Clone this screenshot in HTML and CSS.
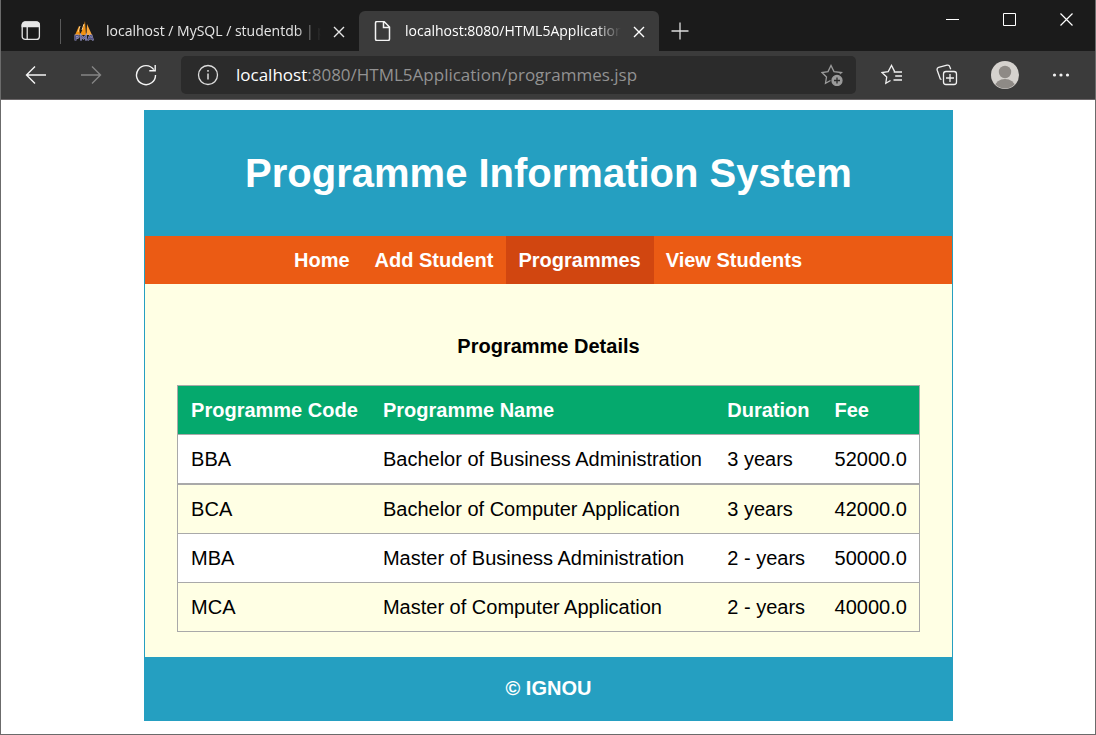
FILE: index.html
```
<!DOCTYPE html>
<html lang="en">
<head>
<meta charset="utf-8">
<title>Programme Information System</title>
<link rel="stylesheet" href="styles.css">
</head>
<body>
<div class="window">
  <header class="titlebar">
    <button class="icon-button tab-actions" aria-label="Tab actions menu">
      <svg width="20" height="20" viewBox="0 0 20 20" fill="none" stroke="#e6e6e6" stroke-width="1.3"><rect x="1.2" y="1.2" width="17.2" height="17.2" rx="3"/><path d="M1.2 5V4a3 3 0 0 1 3-3h11a3 3 0 0 1 3 3v1.6H1.2z" fill="#e6e6e6"/><path d="M6.2 5v13"/></svg>
    </button>
    <div class="tab">
      <svg class="favicon" width="20" height="20" viewBox="0 0 20 20"><path d="M1 14 5 5l1 9zM6 14c2-4 4-9 5-14l1 14z" fill="#f29111"/><path d="M12.500 14 13 3l5 11z" fill="#f9a63a"/><path d="M8 9 10 3M4 11l2-6" stroke="#ffd08a"/><path d="M1.500 19.500v-5h3q1 2.500-3 2.500M7 19.500v-5l2.500 3 2.500-3v5M14 19.500l2-5h1.500l1.500 5M14.500 17.500h4" fill="none" stroke="#9a9ab8" stroke-width="2"/><path d="M1.500 19.500v-5h3q1 2.500-3 2.500M7 19.500v-5l2.500 3 2.500-3v5M14 19.500l2-5h1.500l1.500 5M14.500 17.500h4" fill="none" stroke="#50508a" stroke-width="1"/></svg>
      <span class="tab-title">localhost / MySQL / studentdb | p</span>
      <button class="icon-button close" aria-label="Close tab"><svg width="12" height="12" viewBox="0 0 12 12" stroke="#e6e6e6" stroke-width="1.400"><path d="M1 1l10 10M11 1 1 11"/></svg></button>
    </div>
    <div class="tab tab-active">
      <svg class="favicon" width="20" height="20" viewBox="0 0 20 20" fill="none" stroke="#f4f4f4" stroke-width="1.500"><path d="M2.500 2a1.500 1.500 0 0 1 1.500-1.500h7l5.500 5.500v12a1.500 1.500 0 0 1-1.500 1.500H4A1.500 1.500 0 0 1 2.500 18zM10.500.7v5.800h5.800"/></svg>
      <span class="tab-title">localhost:8080/HTML5Application</span>
      <button class="icon-button close" aria-label="Close tab"><svg width="12" height="12" viewBox="0 0 12 12" stroke="#fff" stroke-width="1.400"><path d="M1 1l10 10M11 1 1 11"/></svg></button>
    </div>
    <button class="icon-button new-tab" aria-label="New tab"><svg width="18" height="18" viewBox="0 0 18 18" stroke="#ddd" stroke-width="1.300"><path d="M9 .5v17M.5 9h17"/></svg></button>
    <div class="window-buttons">
      <button class="icon-button" aria-label="Minimize"><svg width="13" height="13" viewBox="0 0 13 13" stroke="#fff"><path d="M0 6.500h13"/></svg></button>
      <button class="icon-button" aria-label="Maximize"><svg width="13" height="13" viewBox="0 0 13 13" stroke="#fff" fill="none"><path d="M.5.5h12v12H.5z"/></svg></button>
      <button class="icon-button" aria-label="Close"><svg width="13" height="13" viewBox="0 0 13 13" stroke="#fff" stroke-width="1.200"><path d="M.5.5l12 12M12.500.5l-12 12"/></svg></button>
    </div>
  </header>
  <div class="toolbar">
    <div class="navigation">
      <button class="icon-button" aria-label="Back"><svg width="22" height="20" viewBox="0 0 22 20" fill="none" stroke="#f4f4f4" stroke-width="1.400"><path d="M21 10H1.500M10 1.500 1.500 10l8.500 8.500"/></svg></button>
      <button class="icon-button" aria-label="Forward" disabled><svg width="22" height="20" viewBox="0 0 22 20" fill="none" stroke="#858585" stroke-width="1.400"><path d="M1 10h19.500M12 1.500l8.500 8.500-8.500 8.500"/></svg></button>
      <button class="icon-button" aria-label="Refresh"><svg width="22" height="22" viewBox="0 0 22 22" fill="none" stroke="#f4f4f4" stroke-width="1.400"><path d="M20.500 11A9.500 9.500 0 1 1 18.800 5.700M20.200 1v5.800h-5.900"/></svg></button>
    </div>
    <div class="address">
      <button class="icon-button" aria-label="Site information"><svg width="22" height="22" viewBox="0 0 22 22" fill="none" stroke="#ddd" stroke-width="1.300"><circle cx="11" cy="11" r="9.500"/><path d="M11 9.500v6M11 6v1.700" stroke-width="1.500"/></svg></button>
      <div class="url"><strong>localhost</strong>:8080/HTML5Application/programmes.jsp</div>
      <button class="icon-button" aria-label="Add to favorites"><svg width="22" height="22" viewBox="0 0 22 22" fill="none" stroke="#9b9b9b" stroke-width="1.300"><path d="M9.500 16.500 4.500 19.200l1-6.200L1 8.500l6-.9L10 1.500l3 6.100 7.500.9-1.700 1.500"/><circle cx="16" cy="16.500" r="5" fill="#9b9b9b"/><path d="M16 13.500v6M13 16.500h6" stroke="#2b2b2b"/></svg></button>
    </div>
    <div class="tools">
      <button class="icon-button" aria-label="Favorites"><svg width="22" height="22" viewBox="0 0 22 22" fill="none" stroke="#f1f1f1" stroke-width="1.300"><path d="M9.500 16.500 4.800 19.200l.9-6.200L1 8.500l6.200-.9L10.500 1.500l3 5.900M12.700 8H21M14.200 12H21M12.500 16H21"/></svg></button>
      <button class="icon-button" aria-label="Collections"><svg width="22" height="22" viewBox="0 0 22 22" fill="none" stroke="#f1f1f1" stroke-width="1.300"><rect x="7.500" y="7.500" width="13" height="13" rx="2.500"/><path d="M14 10v8M10 14h8M5.500 15.500 4.300 15 1.200 6.200A2.300 2.300 0 0 1 2.600 3.400L11 1.200a2.300 2.300 0 0 1 2.800 1.500l.9 2.500"/></svg></button>
      <button class="icon-button" aria-label="Profile"><svg width="28" height="28" viewBox="0 0 28 28"><defs><clipPath id="face"><circle cx="14" cy="14" r="13.500"/></clipPath></defs><circle cx="14" cy="14" r="14" fill="#d5d2ce"/><g fill="#8e8a86" clip-path="url(#face)"><circle cx="14" cy="11" r="6.200"/><ellipse cx="14" cy="25.500" rx="10" ry="7.500"/></g></svg></button>
      <button class="icon-button" aria-label="Settings and more"><svg width="18" height="4" viewBox="0 0 18 4" fill="#f1f1f1"><circle cx="2.500" cy="2" r="1.600"/><circle cx="9" cy="2" r="1.600"/><circle cx="15.500" cy="2" r="1.600"/></svg></button>
    </div>
  </div>
  <div class="page">
    <div class="site">
      <header class="banner"><h1>Programme Information System</h1></header>
      <nav class="menu">
        <a href="#">Home</a>
        <a href="#">Add Student</a>
        <a href="#" class="current" aria-current="page">Programmes</a>
        <a href="#">View Students</a>
      </nav>
      <main class="content">
        <h2>Programme Details</h2>
        <table class="programmes">
          <thead><tr><th>Programme Code</th><th>Programme Name</th><th>Duration</th><th>Fee</th></tr></thead>
          <tbody>
            <tr><td>BBA</td><td>Bachelor of Business Administration</td><td>3 years</td><td>52000.0</td></tr>
            <tr><td>BCA</td><td>Bachelor of Computer Application</td><td>3 years</td><td>42000.0</td></tr>
            <tr><td>MBA</td><td>Master of Business Administration</td><td>2 - years</td><td>50000.0</td></tr>
            <tr><td>MCA</td><td>Master of Computer Application</td><td>2 - years</td><td>40000.0</td></tr>
          </tbody>
        </table>
      </main>
      <footer class="footer">© IGNOU</footer>
    </div>
  </div>
</div>
</body>
</html>
```
FILE: styles.css
```
* { box-sizing: border-box; }

body {
  margin: 0;
  font-family: "Liberation Sans", Arial, sans-serif;
  font-size: 20px;
  line-height: 24px;
  color: #000;
}

.window {
  display: flex;
  flex-direction: column;
  min-height: 100vh;
  border: 1px solid #6b6b6b;
  border-top: 0;
}

.titlebar, .toolbar, .url { font-family: "Open Sans", "Noto Sans", sans-serif; }

.icon-button {
  display: flex;
  flex: none;
  align-items: center;
  justify-content: center;
  padding: 0;
  border: 0;
  background: none;
}

.titlebar {
  display: flex;
  align-items: flex-end;
  height: 51px;
  background: #1b1b1b;
}

.tab-actions { width: 59px; height: 40px; }

.tab {
  display: flex;
  align-items: center;
  width: 299px;
  height: 40px;
  padding: 0 14px;
  color: #e6e6e6;
  font-size: 14px;
  background: linear-gradient(#5a5a5a, #5a5a5a) 0 50% / 1px 25px no-repeat;
}

.tab-active {
  width: 300px;
  border-radius: 6px 6px 0 0;
  color: #fff;
  background: #3b3b3b;
}

.favicon { flex: none; margin-right: 12px; }

.tab-title {
  flex: 1;
  min-width: 0;
  overflow: hidden;
  white-space: nowrap;
  mask-image: linear-gradient(to right, #000 88%, transparent);
}

.close { margin-left: 12px; padding: 2px 0 0; }

.new-tab { width: 42px; height: 40px; }

.window-buttons {
  display: flex;
  align-self: flex-start;
  margin-left: auto;
}

.window-buttons .icon-button { width: 57px; height: 39px; }

.toolbar {
  display: flex;
  align-items: center;
  height: 49px;
  border-bottom: 1px solid #6a6668;
  background: #3b3b3b;
}

.navigation {
  display: flex;
  gap: 33px;
  padding: 0 24px;
}

.address {
  display: flex;
  flex: 1;
  align-items: center;
  gap: 17px;
  min-width: 0;
  height: 38px;
  padding: 0 13px 0 16px;
  border-radius: 5px;
  background: #2b2b2b;
}

.url {
  flex: 1;
  min-width: 0;
  overflow: hidden;
  white-space: nowrap;
  font-size: 17px;
  color: #929292;
}

.url strong { font-weight: 400; color: #fff; }

.tools {
  display: flex;
  align-items: center;
  gap: 33px;
  padding: 0 25px;
}

.page {
  flex: 1;
  padding: 10px 0 13px 1px;
  background: #fff;
}

.site {
  width: 74%;
  margin: 0 auto;
  border: 1px solid #259fc1;
  background: #ffffe4;
}

.banner {
  padding: 38px 16px 39px;
  background: #259fc1;
  color: #fff;
  text-align: center;
}

.banner h1 {
  margin: 0;
  font-size: 40px;
  line-height: 48px;
}

.menu {
  display: flex;
  justify-content: center;
  background: #eb5b14;
}

.menu a {
  padding: 12px 13px 12px 12px;
  color: #fff;
  font-weight: 700;
  text-decoration: none;
}

.menu .current { background: #d14610; }

.content { padding: 50px 32px 25px; }

.content h2 {
  margin: 0 0 27px;
  font-size: 20px;
  line-height: 24px;
  text-align: center;
}

.programmes {
  width: 100%;
  border: 1px solid #a9a9a9;
  border-bottom: 0;
  border-spacing: 0;
}

.programmes th, .programmes td {
  padding: 12px 12px 12px 13px;
  border-bottom: 1px solid #a9a9a9;
  text-align: left;
  white-space: nowrap;
}

.programmes th { background: #05a96d; color: #fff; }

.programmes tbody tr:nth-child(odd) { background: #fff; }

.programmes tbody tr:first-child td { border-bottom-width: 2px; }

.footer {
  padding: 19px 16px 20px;
  background: #259fc1;
  color: #fff;
  font-weight: 700;
  text-align: center;
}
```
